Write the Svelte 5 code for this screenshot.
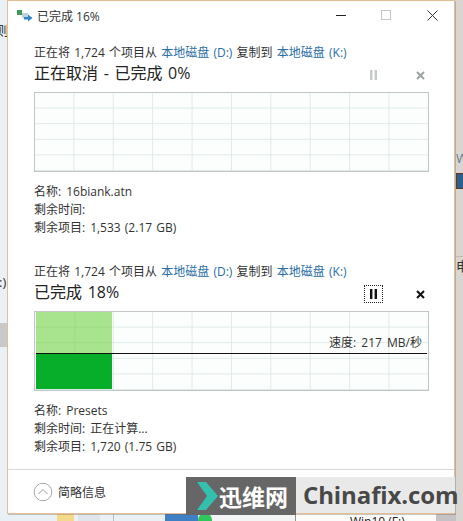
<script>
    const jobs = [
        {
            heading: '正在取消 - 已完成 0%',
            name: '16biank.atn',
            time: '',
            items: '1,533 (2.17 GB)',
            active: false,
            fill: 0
        },
        {
            heading: '已完成 18%',
            name: 'Presets',
            time: '正在计算...',
            items: '1,720 (1.75 GB)',
            active: true,
            fill: 76
        }
    ];
</script>

<div class="desktop">
    <!-- bits of the explorer windows behind the dialog -->
    <span class="behind b-glyph" style="left:-4px;top:22px">则</span>
    <span class="behind b-glyph" style="left:-1px;top:274px">:)</span>
    <div class="behind" style="left:0;top:323px;width:7px;height:24px;background:#c9c9c9"></div>
    <span class="behind b-glyph b-blue" style="left:456px;top:150px">W</span>
    <div class="behind b-file" style="left:456px;top:173px"></div>
    <div class="behind" style="left:456px;top:256px;width:7px;height:1px;background:#bdb9b3"></div>
    <span class="behind b-glyph" style="left:456px;top:258px">电</span>
    <div class="behind" style="left:57px;top:513px;width:17px;height:8px;background:#f3d98a"></div>
    <div class="behind" style="left:78px;top:513px;width:22px;height:8px;background:#dfe5ea"></div>
    <div class="behind" style="left:113px;top:513px;width:1px;height:8px;background:#b9bec4"></div>
    <div class="behind" style="left:165px;top:513px;width:33px;height:8px;background:#3f7fc4"></div>
    <div class="behind" style="left:198px;top:513px;width:14px;height:14px;border-radius:50%;background:#2fc65c"></div>
    <div class="behind" style="left:212px;top:513px;width:83px;height:8px;background:#f2f5f4"></div>
    <div class="behind" style="left:295px;top:513px;width:1px;height:8px;background:#9a8f7c"></div>
    <div class="behind" style="left:296px;top:513px;width:140px;height:8px;background:#fbfbfa"></div>
    <span class="behind b-drive">Win10 (F:)</span>
    <div class="behind" style="left:436px;top:513px;width:20px;height:8px;background:#c4c2c4"></div>

    <div class="window">
        <header class="titlebar">
            <svg class="app-icon" width="16" height="12" viewBox="0 0 16 12" aria-hidden="true">
                <rect x="0" y="0" width="5" height="5" fill="#3f9a5a" />
                <rect x="5" y="3" width="6" height="5" fill="#bcd3dd" />
                <path d="M7 7h4V4.5L15.5 8 11 11.5V9.5H7z" fill="#2f86c8" />
            </svg>
            <span class="title">已完成 16%</span>
            <div class="win-controls">
                <svg width="10" height="10" viewBox="0 0 10 10" aria-hidden="true"><path d="M0 5.5h10" stroke="#222" stroke-width="1" /></svg>
                <svg width="10" height="10" viewBox="0 0 10 10" aria-hidden="true"><rect x="0.5" y="0.5" width="9" height="9" fill="none" stroke="#c6c6c6" /></svg>
                <svg width="11" height="11" viewBox="0 0 11 11" aria-hidden="true"><path d="M0.5 0.5l10 10M10.5 0.5l-10 10" stroke="#333" stroke-width="1" fill="none" /></svg>
            </div>
        </header>

        <main class="jobs">
            {#each jobs as job}
                <section class="job">
                    <p class="route">
                        正在将 1,724 个项目从 <span class="link">本地磁盘 (D:)</span> 复制到 <span class="link">本地磁盘 (K:)</span>
                    </p>
                    <div class="heading-row">
                        <h2>{job.heading}</h2>
                        <button class="job-btn pause" class:active={job.active} aria-label="暂停">
                            <svg width="9" height="10" viewBox="0 0 9 10"><path d="M1 0h2.4v10H1zM5.6 0H8v10H5.6z" fill="currentColor" /></svg>
                        </button>
                        <button class="job-btn stop" class:active={job.active} aria-label="取消">
                            <svg width="9" height="9" viewBox="0 0 9 9"><path d="M1 1l7 7M8 1L1 8" stroke="currentColor" stroke-width="2" fill="none" /></svg>
                        </button>
                    </div>
                    <div class="chart">
                        {#if job.active}
                            <div class="fill-light" style="width: {job.fill}px"></div>
                            <div class="fill-dark" style="width: {job.fill}px"></div>
                            <div class="speed-line"></div>
                            <span class="speed">速度: 217 MB/秒</span>
                        {/if}
                    </div>
                    <dl class="details">
                        <div><dt>名称:</dt><dd>{job.name}</dd></div>
                        <div><dt>剩余时间:</dt><dd>{job.time}</dd></div>
                        <div><dt>剩余项目:</dt><dd>{job.items}</dd></div>
                    </dl>
                </section>
            {/each}
        </main>

        <footer class="footer">
            <svg width="20" height="20" viewBox="0 0 20 20" aria-hidden="true">
                <circle cx="10" cy="10" r="8.8" fill="none" stroke="#a8a8a8" stroke-width="1" />
                <path d="M5.5 12L10 7.5l4.5 4.5" fill="none" stroke="#9a9a9a" stroke-width="1" />
            </svg>
            <span>简略信息</span>
        </footer>
    </div>

    <!-- site watermark pasted over the corner -->
    <div class="watermark">
        <div class="wm-dark">
            <svg width="21" height="28" viewBox="0 0 21 28" aria-hidden="true"><path d="M0 0h9l12 14L9 28H0l10-14z" fill="#35bfae" /></svg>
            <span>迅维网</span>
        </div>
        <div class="wm-light">Chinafix.com</div>
    </div>
</div>

<style>
    :global(body) {
        margin: 0;
    }

    .desktop {
        position: relative;
        width: 463px;
        height: 521px;
        overflow: hidden;
        background: linear-gradient(to right, #e9f1f6 0, #e9f1f6 455px, #d9d6d1 455px, #d9d6d1 100%);
        font-family: "Open Sans", "Noto Sans CJK SC", sans-serif;
        font-size: 12px;
        color: #333;
    }

    .behind {
        position: absolute;
    }

    .b-glyph {
        font-size: 13px;
        line-height: 16px;
        color: #333;
    }

    .b-blue {
        color: #6a7f95;
    }

    .b-file {
        width: 7px;
        height: 14px;
        background: #2c5f8e;
        border: 1px solid #5d3a1c;
        border-right: 0;
    }

    .b-drive {
        left: 350px;
        top: 514px;
        font-size: 12px;
        line-height: 16px;
        color: #222;
    }

    .window {
        position: absolute;
        left: 7px;
        top: 0;
        width: 446px;
        height: 512px;
        display: flex;
        flex-direction: column;
        background: #fff;
        border: 1px solid #e3bd95;
        box-shadow: 1px 1px 0 rgba(120, 100, 80, 0.35);
    }

    .titlebar {
        flex: none;
        height: 30px;
        display: flex;
        align-items: center;
        padding: 0 16px 0 9px;
    }

    .app-icon {
        margin-right: 4px;
    }

    .title {
        font-size: 12px;
    }

    .win-controls {
        margin-left: auto;
        margin-top: -2px;
        display: flex;
        align-items: center;
        gap: 30px;
    }

    .win-controls svg:nth-child(1) {
        margin-right: 5px;
    }

    .win-controls svg:nth-child(2) {
        margin-right: 6px;
    }

    .jobs {
        flex: 1;
        padding: 13px 26px 0;
        display: flex;
        flex-direction: column;
        gap: 26px;
    }

    .route {
        margin: 0;
        line-height: 18px;
        white-space: nowrap;
        word-spacing: 1.1px;
    }

    .link {
        color: #2a6ea6;
    }

    .heading-row {
        height: 26px;
        display: flex;
        align-items: center;
    }

    h2 {
        margin: 0 0 6px;
        font-size: 16px;
        font-weight: 400;
        color: #222;
        white-space: nowrap;
        word-spacing: 1.5px;
    }

    .job-btn {
        display: flex;
        align-items: center;
        justify-content: center;
        padding: 0;
        background: none;
        border: 1px solid transparent;
        color: #c4c8c8;
    }

    .job-btn.active {
        color: #111;
    }

    .pause {
        margin-left: auto;
        width: 19px;
        height: 18px;
    }

    .pause.active {
        border: 1px dotted #222;
    }

    .stop {
        margin-left: 28px;
        margin-right: -1px;
        width: 18px;
        height: 18px;
    }

    .stop:not(.active) {
        color: #9da3a3;
    }

    .chart {
        position: relative;
        margin-top: 4px;
        height: 78px;
        width: 393px;
        border: 1px solid #c3c6c6;
        background-color: #fcfefe;
        background-image:
            linear-gradient(to right, #dfeae6 1px, transparent 1px),
            linear-gradient(to bottom, #dfeae6 1px, transparent 1px);
        background-size: 39.4px 15.6px;
        background-position: -1px -1px;
    }

    .fill-light {
        position: absolute;
        left: 1px;
        top: 0;
        height: 42px;
        background: #a8e38d;
        background-image: linear-gradient(to right, #9cdb82 1px, transparent 1px), linear-gradient(to bottom, #9cdb82 1px, transparent 1px);
        background-size: 39.4px 15.6px;
        background-position: -1px -1px;
    }

    .fill-dark {
        position: absolute;
        left: 1px;
        top: 42px;
        bottom: 1px;
        background: #06ae2a;
    }

    .speed-line {
        position: absolute;
        left: 1px;
        top: 41px;
        width: 391px;
        height: 1px;
        background: #111;
    }

    .speed {
        position: absolute;
        right: 6px;
        top: 22px;
        line-height: 18px;
        color: #333;
        white-space: nowrap;
        word-spacing: 2px;
    }

    .details {
        margin: 11px 0 0;
        line-height: 18px;
        word-spacing: 1px;
    }

    .details div {
        display: flex;
        gap: 5px;
    }

    dt,
    dd {
        margin: 0;
    }

    .footer {
        flex: none;
        height: 43px;
        display: flex;
        align-items: center;
        gap: 5px;
        padding-left: 25px;
        border-top: 1px solid #d8d8d8;
        font-size: 12px;
        color: #333;
    }

    .watermark {
        position: absolute;
        left: 186px;
        top: 477px;
        display: flex;
        height: 36px;
    }

    .wm-dark {
        width: 110px;
        height: 38px;
        box-sizing: border-box;
        display: flex;
        align-items: center;
        gap: 1px;
        padding-left: 11px;
        background: #666;
        color: #fff;
        font-size: 23px;
        font-weight: 700;
        white-space: nowrap;
    }

    .wm-light {
        width: 159px;
        padding-left: 7px;
        box-sizing: border-box;
        background: #e9e9e9;
        color: #484848;
        font-family: "Open Sans", sans-serif;
        font-size: 24px;
        font-weight: 700;
        letter-spacing: -0.1px;
        line-height: 36px;
        white-space: nowrap;
    }
</style>
